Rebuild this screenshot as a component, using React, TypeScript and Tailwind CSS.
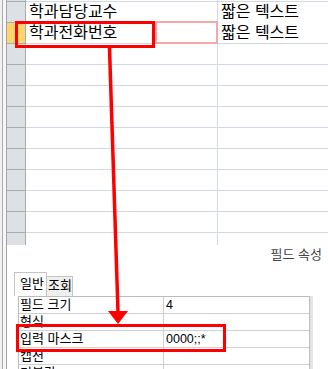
import React from 'react';

const font = { fontFamily: '"Liberation Sans", "Noto Sans CJK KR", sans-serif' };

const rows = [
  { name: '학과담당교수', type: '짧은 텍스트' },
  { name: '학과전화번호', type: '짧은 텍스트', current: true },
  ...Array.from({ length: 10 }, () => ({ name: '', type: '' })),
];

const props = [
  { label: '필드 크기', value: '4' },
  { label: '형식', value: '' },
  { label: '입력 마스크', value: '0000;;*' },
  { label: '캡션', value: '' },
  { label: '기본값', value: '' },
];

function Datasheet() {
  return (
    <div className="h-[245px] overflow-hidden flex flex-col shrink-0">
      <div className="flex h-[2px] shrink-0">
        <div className="w-[19px] bg-[#dde1e6] border-r border-b border-[#a6abb1]" />
        <div className="w-[192px] border-r border-b border-[#d3d9e4]" />
        <div className="flex-1 border-b border-[#d3d9e4]" />
      </div>
      {rows.map((row, i) => (
        <div key={i} className="flex h-[21px] shrink-0 text-[16px] leading-[20px] text-black">
          <div
            className={`w-[19px] border-r border-b border-[#a6abb1] ${
              row.current ? 'bg-[#fdd66b]' : 'bg-[#dde1e6]'
            }`}
          />
          <div className={`w-[192px] pl-[3px] border-r border-b border-r-[#d3d9e4] ${i === 0 ? 'border-b-white' : 'border-b-[#d3d9e4]'}`}>
            {row.name}
          </div>
          <div className={`flex-1 pl-[3px] border-b ${i === 0 ? 'border-b-white' : 'border-b-[#d3d9e4]'}`}>
            {row.type}
          </div>
        </div>
      ))}
    </div>
  );
}

function FieldProperties() {
  return (
    <div className="flex-1 flex flex-col">
      <div className="text-right pr-[6px] text-[13px] leading-[17px] text-[#444] pt-px">필드 속성</div>
      <div className="flex items-end ml-[7px] mt-[9px] h-[24px]">
        <div className="w-[33px] h-[24px] bg-white border border-b-0 border-[#c4c4c4] text-[13px] leading-[22px] pl-[5px]">
          일반
        </div>
        <div className="w-[27px] h-[20px] -ml-px bg-[#efefef] border border-b-0 border-[#c4c4c4] text-[13px] leading-[18px] pl-px">
          조회
        </div>
      </div>
      <div className="flex ml-[11px]">
        <div className="w-[292px] border-t border-x border-[#bcbcbc]">
          {props.map((p) => (
            <div key={p.label} className="flex h-[17px] border-b border-[#cfcfcf] text-[13px] leading-[16px]">
              <div className="w-[145px] pl-px border-r border-[#cfcfcf]">{p.label}</div>
              <div className="flex-1 pl-[2px] text-[12.5px]">{p.value}</div>
            </div>
          ))}
        </div>
        <div className="w-[3px] bg-[#e4e4e4]" />
      </div>
    </div>
  );
}

export default function App() {
  return (
    <div className="relative w-[328px] h-[369px] overflow-hidden bg-white flex" style={font}>
      <div className="w-[2px] bg-[#f2f2f2]" />
      <div className="w-px bg-[#a9a9a9]" />
      <div className="w-[3px] bg-[#f7f7f7]" />
      <div className="w-px bg-[#a3a3a3]" />
      <div className="flex-1 flex flex-col">
        <Datasheet />
        <FieldProperties />
      </div>

      {/* focus cell outline */}
      <div className="absolute left-[155px] top-[21px] w-[63px] h-[23px] border-2 border-[#f5a7aa]" />
      {/* annotation boxes */}
      <div className="absolute left-[15px] top-[21px] w-[140px] h-[27px] border-[3px] border-[#ff0000]" />
      <div className="absolute left-[16px] top-[324px] w-[210px] h-[28px] border-[3px] border-[#ff0000]" />
      <svg className="absolute inset-0 pointer-events-none" width="328" height="369">
        <line x1="109.5" y1="48" x2="118" y2="312" stroke="#ff0000" strokeWidth="3.5" />
        <polygon points="108,311 128,311 118,324" fill="#ff0000" />
      </svg>
    </div>
  );
}
